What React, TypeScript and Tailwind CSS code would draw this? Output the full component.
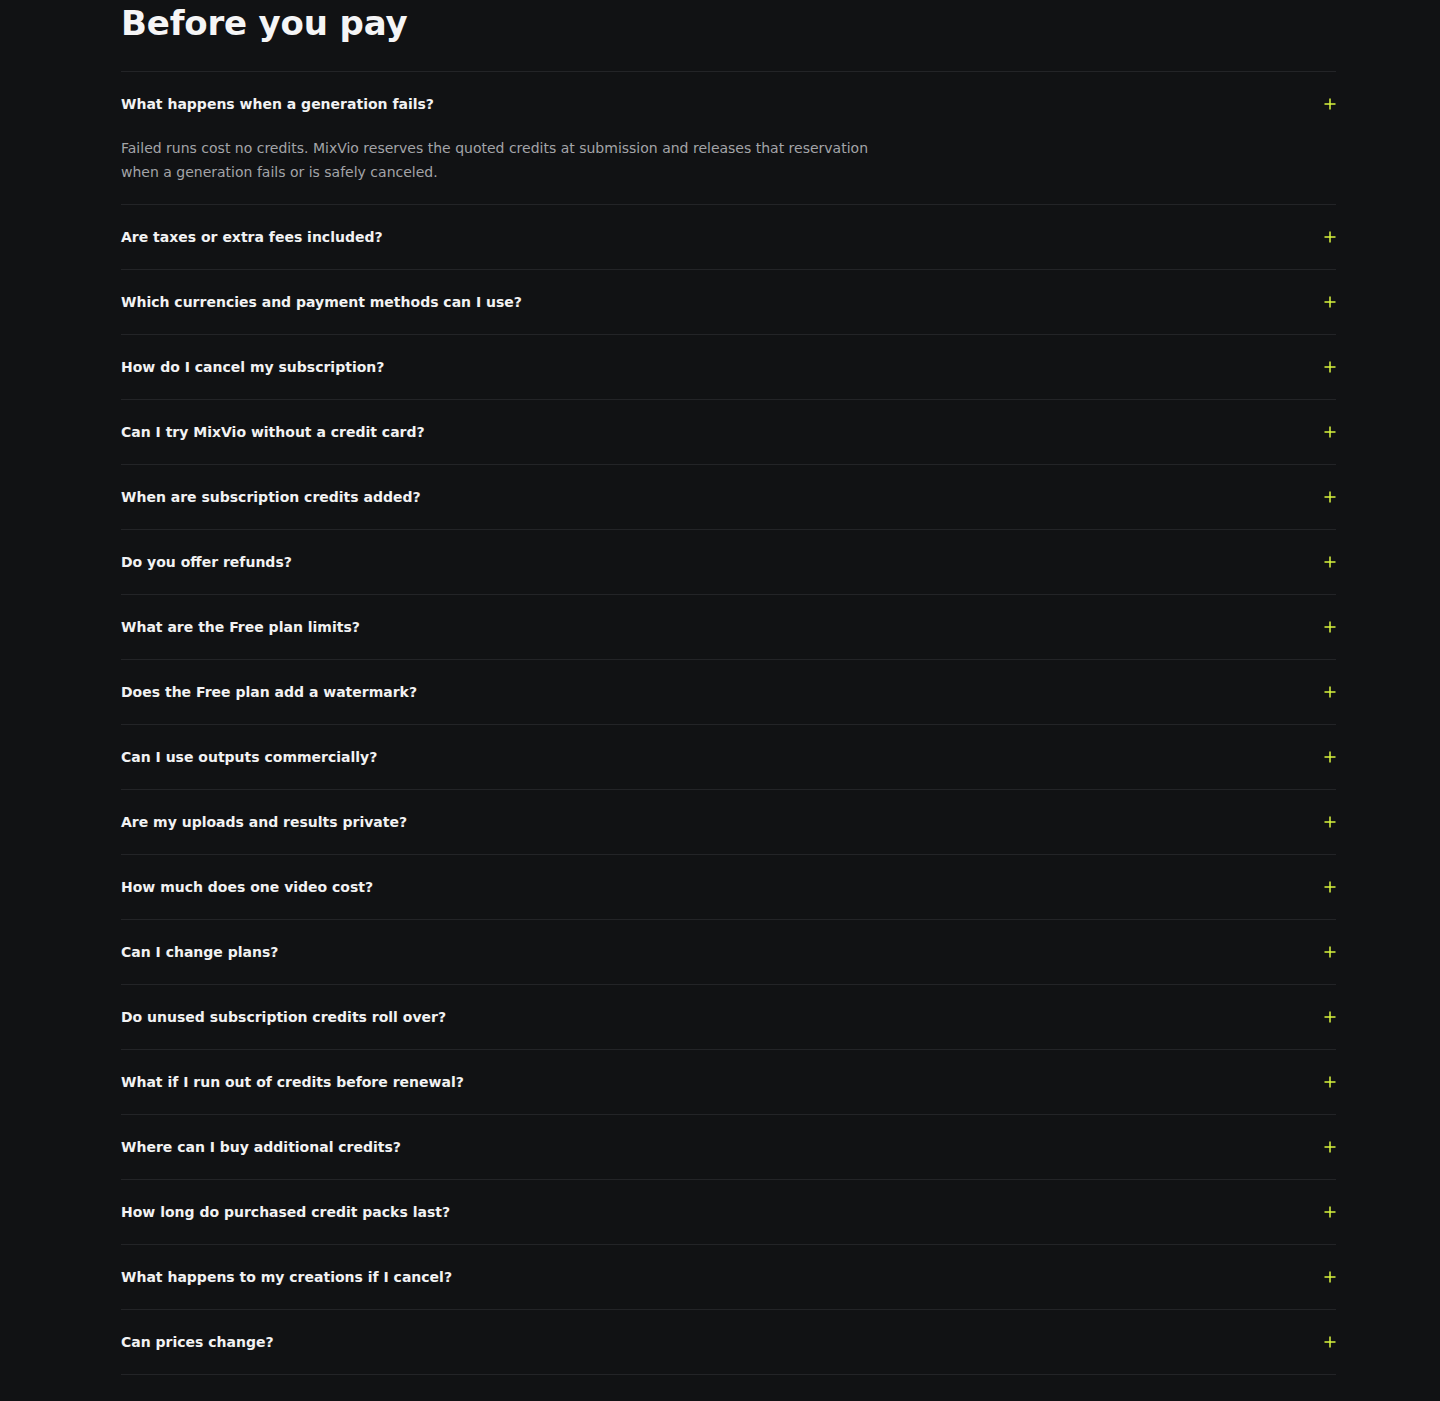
import { useState } from "react";

type Faq = { q: string; a?: string };

const faqs: Faq[] = [
  {
    q: "What happens when a generation fails?",
    a: "Failed runs cost no credits. MixVio reserves the quoted credits at submission and releases that reservation when a generation fails or is safely canceled.",
  },
  { q: "Are taxes or extra fees included?" },
  { q: "Which currencies and payment methods can I use?" },
  { q: "How do I cancel my subscription?" },
  { q: "Can I try MixVio without a credit card?" },
  { q: "When are subscription credits added?" },
  { q: "Do you offer refunds?" },
  { q: "What are the Free plan limits?" },
  { q: "Does the Free plan add a watermark?" },
  { q: "Can I use outputs commercially?" },
  { q: "Are my uploads and results private?" },
  { q: "How much does one video cost?" },
  { q: "Can I change plans?" },
  { q: "Do unused subscription credits roll over?" },
  { q: "What if I run out of credits before renewal?" },
  { q: "Where can I buy additional credits?" },
  { q: "How long do purchased credit packs last?" },
  { q: "What happens to my creations if I cancel?" },
  { q: "Can prices change?" },
];

function PlusIcon() {
  return (
    <svg width="12" height="12" viewBox="0 0 12 12" fill="none" className="shrink-0">
      <path d="M6 0.5v11M0.5 6h11" stroke="#d7f43c" strokeWidth="1.5" />
    </svg>
  );
}

function FaqRow({ item, open, onToggle }: { item: Faq; open: boolean; onToggle: () => void }) {
  return (
    <div className="border-b border-[#232427]">
      <button
        type="button"
        onClick={onToggle}
        className="flex h-16 w-full items-center justify-between text-left"
      >
        <span className="text-[14px] font-bold leading-5 text-[#f2f2f3]">{item.q}</span>
        <PlusIcon />
      </button>
      {open && item.a ? (
        <p className="max-w-3xl pb-5 text-[14px] leading-6 text-[#a3a4a8]">{item.a}</p>
      ) : null}
    </div>
  );
}

export default function App() {
  const [openIdx, setOpenIdx] = useState<number | null>(0);
  return (
    <div
      className="min-h-[1401px] bg-[#111214] pb-6"
      style={{ fontFamily: '"DejaVu Sans", "Noto Sans", sans-serif' }}
    >
      <div className="ml-[121px] w-[1215px]">
        <h1 className="pt-[3px] text-[34px] font-bold leading-10 tracking-[-0.005em] text-[#f5f5f6]">
          Before you pay
        </h1>
        <div className="mt-[28px] border-t border-[#232427]">
          {faqs.map((f, i) => (
            <FaqRow
              key={f.q}
              item={f}
              open={openIdx === i}
              onToggle={() => setOpenIdx(openIdx === i ? null : i)}
            />
          ))}
        </div>
      </div>
    </div>
  );
}
